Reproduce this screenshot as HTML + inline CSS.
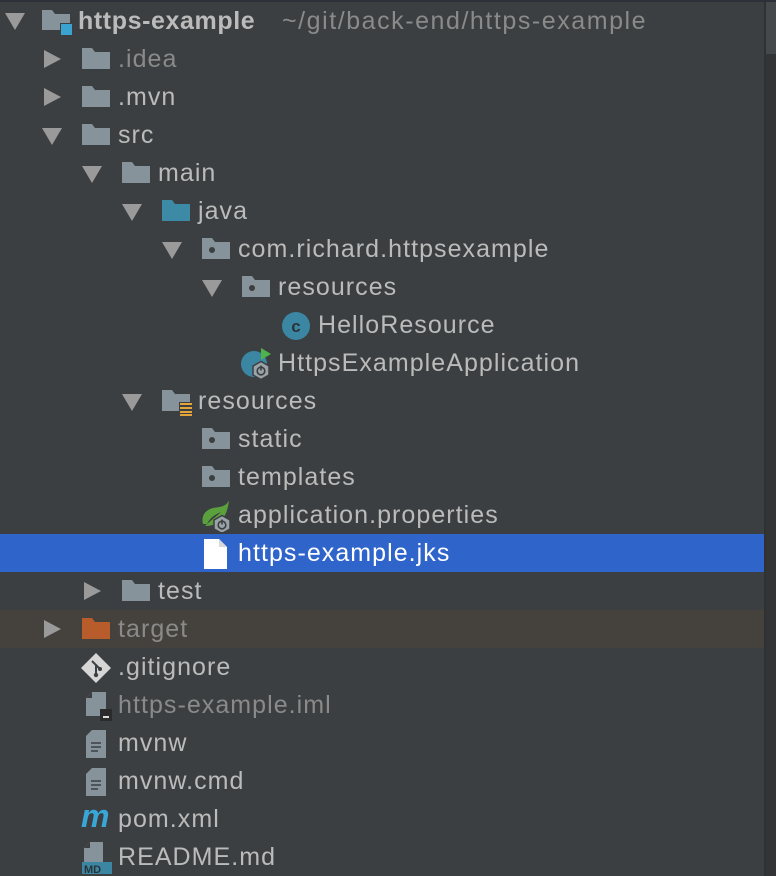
<!DOCTYPE html>
<html><head><meta charset="utf-8"><style>
body{margin:0;width:776px;height:876px;background:#3c3f41;overflow:hidden;position:relative;font-family:"Liberation Sans",sans-serif;}
.top{position:absolute;left:0;top:0;width:776px;height:2px;background:#2b3039}
.sb{position:absolute;left:764px;top:2px;width:2px;height:874px;background:#2f3133}
.sc1{position:absolute;left:766px;top:2px;width:10px;height:52px;background:#46494b}
.sc2{position:absolute;left:766px;top:54px;width:10px;height:822px;background:#323436}
.r{position:absolute;left:0;width:764px;height:38px}
.t{position:absolute;top:6px;font-size:25px;color:#bbbbbb;letter-spacing:1.05px;white-space:nowrap;line-height:27px}
.a{position:absolute}
.i{position:absolute;top:8px}
.dim{color:#8a8a8a}
</style></head><body>
<div class="top"></div><div class="sb"></div><div class="sc1"></div><div class="sc2"></div>

<!-- 0 -->
<div class="r" style="top:2px">
<svg class="a" style="left:5px;top:11px" width="20" height="18"><path d="M0 0H20L10 17Z" fill="#9a9a9a"/></svg>
<svg class="i" style="left:42px" width="32" height="26"><path d="M0 0h10l3 4h15v16H0z" fill="#87939a"/><rect x="18" y="13" width="12" height="12" fill="#3c3f41"/><rect x="19" y="14" width="11" height="11" fill="#3aa3d0"/></svg>
<span class="t" style="left:78px;font-weight:bold;letter-spacing:0.6px">https-example</span>
<span class="t dim" style="left:282px;letter-spacing:1.55px">~/git/back-end/https-example</span>
</div>
<!-- 1 -->
<div class="r" style="top:40px">
<svg class="a" style="left:44px;top:10px" width="18" height="18"><path d="M0 0L17 9L0 18Z" fill="#9a9a9a"/></svg>
<svg class="i" style="left:82px" width="28" height="21"><path d="M0 0h10l3 4h15v17H0z" fill="#87939a"/></svg>
<span class="t dim" style="left:118px">.idea</span></div>
<!-- 2 -->
<div class="r" style="top:78px">
<svg class="a" style="left:44px;top:10px" width="18" height="18"><path d="M0 0L17 9L0 18Z" fill="#9a9a9a"/></svg>
<svg class="i" style="left:82px" width="28" height="21"><path d="M0 0h10l3 4h15v17H0z" fill="#87939a"/></svg>
<span class="t" style="left:118px">.mvn</span></div>
<!-- 3 -->
<div class="r" style="top:116px">
<svg class="a" style="left:42px;top:12px" width="20" height="18"><path d="M0 0H20L10 17Z" fill="#9a9a9a"/></svg>
<svg class="i" style="left:82px" width="28" height="21"><path d="M0 0h10l3 4h15v17H0z" fill="#87939a"/></svg>
<span class="t" style="left:118px">src</span></div>
<!-- 4 -->
<div class="r" style="top:154px">
<svg class="a" style="left:82px;top:12px" width="20" height="18"><path d="M0 0H20L10 17Z" fill="#9a9a9a"/></svg>
<svg class="i" style="left:122px" width="28" height="21"><path d="M0 0h10l3 4h15v17H0z" fill="#87939a"/></svg>
<span class="t" style="left:158px">main</span></div>
<!-- 5 -->
<div class="r" style="top:192px">
<svg class="a" style="left:122px;top:12px" width="20" height="18"><path d="M0 0H20L10 17Z" fill="#9a9a9a"/></svg>
<svg class="i" style="left:162px" width="28" height="21"><path d="M0 0h10l3 4h15v17H0z" fill="#3d8aa6"/></svg>
<span class="t" style="left:198px">java</span></div>
<!-- 6 -->
<div class="r" style="top:230px">
<svg class="a" style="left:162px;top:12px" width="20" height="18"><path d="M0 0H20L10 17Z" fill="#9a9a9a"/></svg>
<svg class="i" style="left:202px" width="28" height="21"><path d="M0 0h10l3 4h15v17H0z" fill="#87939a"/><circle cx="10" cy="12" r="3" fill="#3c3f41"/></svg>
<span class="t" style="left:238px">com.richard.httpsexample</span></div>
<!-- 7 -->
<div class="r" style="top:268px">
<svg class="a" style="left:202px;top:12px" width="20" height="18"><path d="M0 0H20L10 17Z" fill="#9a9a9a"/></svg>
<svg class="i" style="left:242px" width="28" height="21"><path d="M0 0h10l3 4h15v17H0z" fill="#87939a"/><circle cx="10" cy="12" r="3" fill="#3c3f41"/></svg>
<span class="t" style="left:278px">resources</span></div>
<!-- 8 -->
<div class="r" style="top:306px">
<svg class="i" style="left:282px;top:5px" width="30" height="30"><circle cx="14" cy="15" r="14" fill="#3b87a3"/><text x="14" y="21" font-family="Liberation Sans" font-size="17" font-weight="bold" fill="#2a3438" text-anchor="middle">c</text></svg>
<span class="t" style="left:318px">HelloResource</span></div>
<!-- 9 -->
<div class="r" style="top:344px">
<svg class="i" style="left:240px;top:4px" width="34" height="32"><circle cx="14" cy="16" r="13" fill="#3b87a3"/><path d="M21 0L31 6L21 12Z" fill="#4eb34a"/><path d="M13 18l8-4.5 8 4.5v9l-8 4.5-8-4.5z" fill="#9aa3a8" stroke="#3c3f41" stroke-width="1.5"/><circle cx="21" cy="23" r="3.8" fill="none" stroke="#3c3f41" stroke-width="1.6"/><path d="M21 17.5v5" stroke="#3c3f41" stroke-width="1.6"/></svg>
<span class="t" style="left:278px">HttpsExampleApplication</span></div>
<!-- 10 -->
<div class="r" style="top:382px">
<svg class="a" style="left:122px;top:12px" width="20" height="18"><path d="M0 0H20L10 17Z" fill="#9a9a9a"/></svg>
<svg class="i" style="left:162px" width="32" height="26"><path d="M0 0h10l3 4h15v17H0z" fill="#87939a"/><rect x="17" y="12" width="14" height="14" fill="#3c3f41"/><g fill="#e3a43a"><rect x="18" y="13" width="12" height="2"/><rect x="18" y="17" width="12" height="2"/><rect x="18" y="21" width="12" height="2"/><rect x="18" y="24" width="12" height="2"/></g></svg>
<span class="t" style="left:198px">resources</span></div>
<!-- 11 -->
<div class="r" style="top:420px">
<svg class="i" style="left:202px" width="28" height="21"><path d="M0 0h10l3 4h15v17H0z" fill="#87939a"/><circle cx="10" cy="12" r="3" fill="#3c3f41"/></svg>
<span class="t" style="left:238px">static</span></div>
<!-- 12 -->
<div class="r" style="top:458px">
<svg class="i" style="left:202px" width="28" height="21"><path d="M0 0h10l3 4h15v17H0z" fill="#87939a"/><circle cx="10" cy="12" r="3" fill="#3c3f41"/></svg>
<span class="t" style="left:238px">templates</span></div>
<!-- 13 -->
<div class="r" style="top:496px">
<svg class="i" style="left:201px;top:4px" width="32" height="32"><path d="M28 0C26 6 20 7 12 8C4 10 0 16 2 24L6 24C10 16 16 14 20 12C16 16 10 20 4 26C14 26 26 22 28 0Z" fill="#5aa13e"/><path d="M13 20l8-4.5 8 4.5v9l-8 4.5-8-4.5z" fill="#9aa3a8" stroke="#3c3f41" stroke-width="1.5"/><circle cx="21" cy="25" r="3.8" fill="none" stroke="#3c3f41" stroke-width="1.6"/><path d="M21 19.5v5" stroke="#3c3f41" stroke-width="1.6"/></svg>
<span class="t" style="left:238px">application.properties</span></div>
<!-- 14 selected -->
<div class="r" style="top:534px;background:#2f65ca">
<svg class="i" style="left:204px;top:5px" width="24" height="30"><path d="M0 0h15l8 8v22H0z" fill="#ffffff"/><path d="M15 0v8h8" fill="#d8d8d8"/></svg>
<span class="t" style="left:238px;color:#ffffff">https-example.jks</span></div>
<!-- 15 -->
<div class="r" style="top:572px">
<svg class="a" style="left:84px;top:10px" width="18" height="18"><path d="M0 0L17 9L0 18Z" fill="#9a9a9a"/></svg>
<svg class="i" style="left:122px" width="28" height="21"><path d="M0 0h10l3 4h15v17H0z" fill="#87939a"/></svg>
<span class="t" style="left:158px">test</span></div>
<!-- 16 -->
<div class="r" style="top:610px;background:#45423d">
<svg class="a" style="left:44px;top:10px" width="18" height="18"><path d="M0 0L17 9L0 18Z" fill="#9a9a9a"/></svg>
<svg class="i" style="left:82px" width="28" height="21"><path d="M0 0h10l3 4h15v17H0z" fill="#b85c2b"/></svg>
<span class="t dim" style="left:118px">target</span></div>
<!-- 17 -->
<div class="r" style="top:648px">
<svg class="i" style="left:81px;top:5px" width="30" height="30"><path d="M15 0L30 15L15 30L0 15Z" fill="#d6d6d6"/><path d="M11 8l4 4v10M15 12l4 4" stroke="#3c3f41" stroke-width="2" fill="none"/><circle cx="15" cy="22" r="2.2" fill="#3c3f41"/><circle cx="19" cy="16" r="2" fill="#3c3f41"/></svg>
<span class="t" style="left:118px">.gitignore</span></div>
<!-- 18 -->
<div class="r" style="top:686px">
<svg class="i" style="left:86px;top:6px" width="26" height="30"><path d="M6 0h14v24H0V6z" fill="#87939a"/><path d="M6 0v6H0" fill="#3c3f41"/><rect x="14" y="17" width="12" height="12" fill="#2b2b2b"/><rect x="17" y="24" width="6" height="2" fill="#ddd"/></svg>
<span class="t dim" style="left:118px">https-example.iml</span></div>
<!-- 19 -->
<div class="r" style="top:724px">
<svg class="i" style="left:86px;top:6px" width="22" height="30"><path d="M6 0h14v28H0V6z" fill="#87939a"/><path d="M5 13h10M5 17h10M5 21h7" stroke="#3c3f41" stroke-width="1.6"/></svg>
<span class="t" style="left:118px">mvnw</span></div>
<!-- 20 -->
<div class="r" style="top:762px">
<svg class="i" style="left:86px;top:6px" width="22" height="30"><path d="M6 0h14v28H0V6z" fill="#87939a"/><path d="M5 13h10M5 17h10M5 21h7" stroke="#3c3f41" stroke-width="1.6"/></svg>
<span class="t" style="left:118px">mvnw.cmd</span></div>
<!-- 21 -->
<div class="r" style="top:800px">
<span class="t" style="left:81px;top:3px;font-size:32px;font-style:italic;font-weight:bold;color:#39a7d6;letter-spacing:0">m</span>
<span class="t" style="left:118px">pom.xml</span></div>
<!-- 22 -->
<div class="r" style="top:838px">
<svg class="i" style="left:82px;top:4px" width="30" height="32"><path d="M8 0h13v22H2V6z" fill="#87939a"/><path d="M8 0v6H2" fill="#3c3f41"/><rect x="0" y="20" width="30" height="12" fill="#3b87a3"/><text x="2" y="31" font-family="Liberation Sans" font-size="11" font-weight="bold" fill="#2a3438">MD</text></svg>
<span class="t" style="left:118px">README.md</span></div>
</body></html>
